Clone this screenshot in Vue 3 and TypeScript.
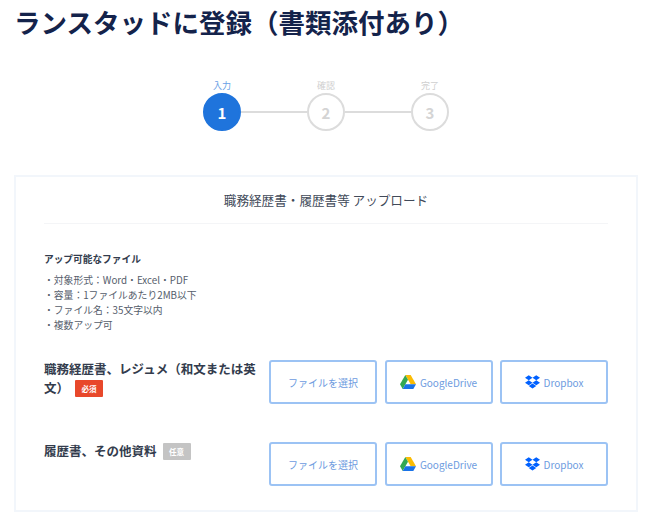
<script setup lang="ts">
interface Step { label: string; num: number; active: boolean }
const steps: Step[] = [
  { label: '入力', num: 1, active: true },
  { label: '確認', num: 2, active: false },
  { label: '完了', num: 3, active: false },
]
const notes: string[] = [
  '・対象形式：Word・Excel・PDF',
  '・容量：1ファイルあたり2MB以下',
  '・ファイル名：35文字以内',
  '・複数アップ可',
]
</script>

<template>
  <main class="page">
    <h1 class="title">ランスタッドに登録（書類添付あり）</h1>

    <ol class="stepper">
      <template v-for="(s, i) in steps" :key="s.num">
        <li v-if="i > 0" class="line"></li>
        <li class="step" :class="{ active: s.active }">
          <span class="step-label">{{ s.label }}</span>
          <span class="circle">{{ s.num }}</span>
        </li>
      </template>
    </ol>

    <section class="card">
      <h2 class="card-title">職務経歴書・履歴書等 アップロード</h2>
      <h3 class="notes-title">アップ可能なファイル</h3>
      <ul class="notes">
        <li v-for="n in notes" :key="n">{{ n }}</li>
      </ul>

      <div class="row first">
        <p class="row-label">職務経歴書、レジュメ（和文または英文）<span class="tag required">必須</span></p>
        <div class="buttons">
          <button class="btn">ファイルを選択</button>
          <button class="btn">
            <svg viewBox="0 0 24 21" width="16" height="14"><path d="M8 0h8l8 14h-8z" fill="#fbbc04"/><path d="M8 0 0 14l4 7 8-14z" fill="#34a853"/><path d="M4 21h16l4-7H8z" fill="#1a73e8"/></svg>
            GoogleDrive
          </button>
          <button class="btn">
            <svg viewBox="0 0 24 22" width="15" height="14"><path d="M6 0 0 4l6 4 6-4zM18 0l-6 4 6 4 6-4zM0 12l6 4 6-4-6-4zM18 8l-6 4 6 4 6-4zM6 17.500l6 4 6-4-6-4z" fill="#0061ff"/></svg>
            Dropbox
          </button>
        </div>
      </div>

      <div class="row second">
        <p class="row-label">履歴書、その他資料<span class="tag optional">任意</span></p>
        <div class="buttons">
          <button class="btn">ファイルを選択</button>
          <button class="btn">
            <svg viewBox="0 0 24 21" width="16" height="14"><path d="M8 0h8l8 14h-8z" fill="#fbbc04"/><path d="M8 0 0 14l4 7 8-14z" fill="#34a853"/><path d="M4 21h16l4-7H8z" fill="#1a73e8"/></svg>
            GoogleDrive
          </button>
          <button class="btn">
            <svg viewBox="0 0 24 22" width="15" height="14"><path d="M6 0 0 4l6 4 6-4zM18 0l-6 4 6 4 6-4zM0 12l6 4 6-4-6-4zM18 8l-6 4 6 4 6-4zM6 17.500l6 4 6-4-6-4z" fill="#0061ff"/></svg>
            Dropbox
          </button>
        </div>
      </div>
    </section>
  </main>
</template>

<style>
html, body { margin: 0; background: #fff; }
</style>

<style scoped>
.page {
  width: 654px;
  height: 524px;
  overflow: hidden;
  box-sizing: border-box;
  padding: 4px 16px 0 14px;
  font-family: "Noto Sans CJK JP", "Noto Sans", sans-serif;
  color: #333c4d;
}
.title {
  margin: 0;
  font-size: 26.500px;
  line-height: 36px;
  font-weight: 700;
  color: #14234b;
  white-space: nowrap;
}
.stepper {
  list-style: none;
  margin: 39px 0 0;
  padding: 0;
  display: flex;
  justify-content: center;
  align-items: flex-end;
}
.step {
  width: 38px;
  display: flex;
  flex-direction: column;
  align-items: center;
}
.step-label {
  font-size: 9px;
  line-height: 13px;
  margin-bottom: 1px;
  color: #cfcfcf;
  white-space: nowrap;
}
.circle {
  width: 38px;
  height: 38px;
  box-sizing: border-box;
  border-radius: 50%;
  border: 2px solid #dcdcdc;
  background: #fff;
  color: #d4d4d4;
  font-size: 15px;
  font-weight: 700;
  display: flex;
  align-items: center;
  justify-content: center;
}
.active .step-label { color: #6a9fe6; }
.active .circle {
  background: #1f74dc;
  border-color: #1f74dc;
  color: #fff;
}
.line {
  width: 66px;
  height: 2px;
  margin-bottom: 18px;
  background: #dcdcdc;
}
.card {
  margin-top: 44px;
  width: 624px;
  height: 337px;
  box-sizing: border-box;
  border: 2px solid #f2f6fb;
  padding: 0 28px;
}
.card-title {
  margin: 0;
  height: 47px;
  line-height: 46px;
  text-align: center;
  font-size: 12.600px;
  font-weight: 400;
  color: #414a59;
  border-bottom: 1px solid #f4f5f7;
  box-sizing: border-box;
}
.notes-title {
  margin: 27px 0 0;
  font-size: 9.700px;
  line-height: 16px;
  font-weight: 700;
  color: #333c4d;
}
.notes {
  list-style: none;
  margin: 6px 0 0;
  padding: 0;
  font-size: 9.800px;
  line-height: 15px;
  color: #555d6b;
}
.row {
  display: flex;
  align-items: flex-start;
  justify-content: space-between;
}
.row.first { margin-top: 27px; }
.row.second { margin-top: 38px; }
.row-label {
  margin: 0;
  width: 216px;
  font-size: 12.500px;
  line-height: 18.500px;
  font-weight: 700;
  color: #333c4d;
}
.tag {
  display: inline-block;
  margin-left: 6px;
  width: 28px;
  height: 17px;
  line-height: 17px;
  text-align: center;
  font-size: 7.500px;
  font-weight: 700;
  color: #fff;
  border-radius: 1px;
  vertical-align: 1px;
}
.required { background: #e8482b; }
.optional { background: #c4c4c4; }
.buttons {
  display: flex;
  gap: 7.500px;
}
.btn {
  width: 108px;
  height: 44px;
  box-sizing: border-box;
  border: 2px solid #9cc3f4;
  border-radius: 3px;
  background: #fff;
  padding: 0;
  display: flex;
  align-items: center;
  justify-content: center;
  gap: 4px;
  font-family: inherit;
  font-size: 10px;
  color: #6d9be0;
}
</style>
